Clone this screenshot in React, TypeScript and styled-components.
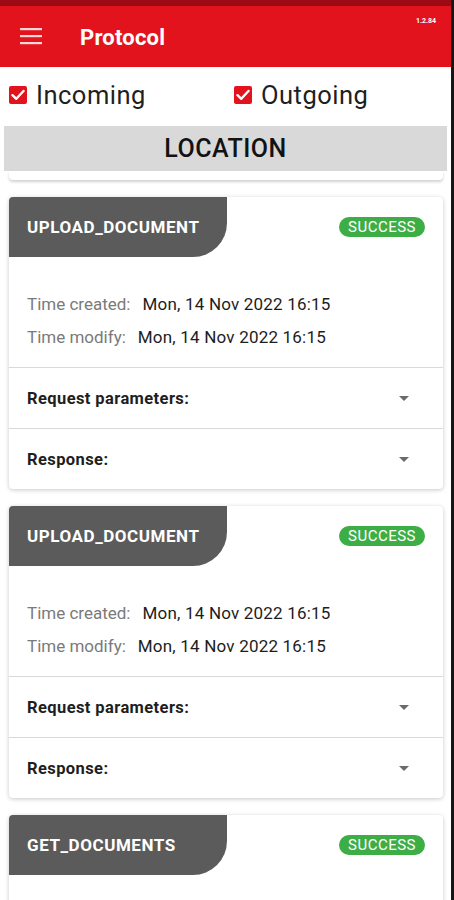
import styled, { createGlobalStyle } from "styled-components";

const GlobalStyle = createGlobalStyle`
  html, body {
    margin: 0;
    padding: 0;
    background: #ffffff;
  }
  body {
    font-family: Roboto, "Noto Sans", "Liberation Sans", sans-serif;
    overflow: hidden;
  }
`;

interface LogItem {
  method: string;
  status: string;
  created: string;
  modified: string;
}

const Screen = styled.div`
  width: 451px;
  height: 900px;
  overflow: hidden;
  border-right: 3px solid #161616;
  background: #ffffff;
`;

const StatusBar = styled.div`
  height: 6px;
  background: #9c0b14;
`;

const Header = styled.header`
  height: 61px;
  background: #e3131d;
  display: flex;
  align-items: center;
  padding-left: 20px;
  position: relative;
`;

const MenuButton = styled.div`
  width: 22px;
  height: 18px;
  display: flex;
  margin-top: -2px;
`;

const Title = styled.h1`
  margin: 2px 0 0 38px;
  color: #ffffff;
  font-size: 22px;
  font-weight: 700;
  letter-spacing: 0.2px;
`;

const Version = styled.span`
  position: absolute;
  top: 11px;
  right: 15px;
  color: #ffffff;
  font-size: 7px;
  font-weight: 700;
`;

const FilterRow = styled.div`
  height: 59px;
  display: flex;
  align-items: center;
  padding-left: 9px;
  padding-bottom: 3px;
  box-sizing: border-box;
`;

const FilterOption = styled.label<{ $width: number }>`
  width: ${(p) => p.$width}px;
  display: flex;
  align-items: center;
  gap: 9px;
  font-size: 25.5px;
  color: #1f1f1f;
  letter-spacing: 0.5px;
`;

const Check = styled.span`
  width: 18px;
  height: 18px;
  border-radius: 2px;
  background: #e3131d;
  display: flex;
  align-items: center;
  justify-content: center;
`;

const SectionBar = styled.div`
  margin: 0 4px;
  height: 45px;
  background: #d8d9d8;
  display: flex;
  align-items: center;
  justify-content: center;
  font-size: 25px;
  font-weight: 500;
  color: #121212;
  letter-spacing: 0.5px;
`;

const List = styled.div`
  display: flex;
  flex-direction: column;
  gap: 17px;
  padding: 0 8px 0 9px;
`;

const CardTail = styled.div`
  height: 9px;
  background: #ffffff;
  border-radius: 0 0 4px 4px;
  box-shadow: 0 2px 3px rgba(0, 0, 0, 0.18);
`;

const Card = styled.div`
  background: #ffffff;
  border-radius: 4px;
  box-shadow: 0 1px 4px rgba(0, 0, 0, 0.22);
  overflow: hidden;
`;

const CardTop = styled.div`
  display: flex;
  justify-content: space-between;
  align-items: flex-start;
`;

const MethodTab = styled.div`
  width: 218px;
  height: 60px;
  box-sizing: border-box;
  padding-left: 18px;
  display: flex;
  align-items: center;
  background: #5b5b5b;
  border-bottom-right-radius: 34px;
  color: #ffffff;
  font-size: 17px;
  font-weight: 700;
  letter-spacing: 0.55px;
`;

const StatusBadge = styled.span`
  margin: 20px 18px 0 0;
  height: 20px;
  padding: 0 9px;
  border-radius: 10px;
  background: #3dae46;
  color: #ffffff;
  font-size: 15px;
  display: flex;
  align-items: center;
  letter-spacing: 0.5px;
`;

const Info = styled.div`
  padding: 31px 18px 13px;
`;

const InfoLine = styled.div`
  line-height: 33px;
  font-size: 17px;
  color: #1d1d1d;
  letter-spacing: 0.2px;
`;

const InfoLabel = styled.span`
  color: #7a7a7a;
  margin-right: 12px;
  letter-spacing: 0;
`;

const Expander = styled.div`
  height: 61px;
  border-top: 1px solid #d9d9d9;
  box-sizing: border-box;
  padding: 0 34px 0 18px;
  display: flex;
  align-items: center;
  justify-content: space-between;
  font-size: 16.5px;
  font-weight: 700;
  letter-spacing: 0.4px;
  color: #1e1e1e;
`;

const items: LogItem[] = [
  {
    method: "UPLOAD_DOCUMENT",
    status: "SUCCESS",
    created: "Mon, 14 Nov 2022 16:15",
    modified: "Mon, 14 Nov 2022 16:15",
  },
  {
    method: "UPLOAD_DOCUMENT",
    status: "SUCCESS",
    created: "Mon, 14 Nov 2022 16:15",
    modified: "Mon, 14 Nov 2022 16:15",
  },
  {
    method: "GET_DOCUMENTS",
    status: "SUCCESS",
    created: "Mon, 14 Nov 2022 16:15",
    modified: "Mon, 14 Nov 2022 16:15",
  },
];

const Hamburger = () => (
  <svg width="22" height="18" viewBox="0 0 22 18">
    <rect x="0" y="1" width="22" height="2.2" fill="#ffd6d6" />
    <rect x="0" y="8" width="22" height="2.2" fill="#ffd6d6" />
    <rect x="0" y="15" width="22" height="2.2" fill="#ffd6d6" />
  </svg>
);

const Tick = () => (
  <svg width="14" height="12" viewBox="0 0 14 12">
    <path
      d="M1.5 6.2 L5.3 9.8 L12.5 2"
      stroke="#ffffff"
      strokeWidth="2.4"
      fill="none"
      strokeLinecap="round"
      strokeLinejoin="round"
    />
  </svg>
);

const Caret = () => (
  <svg width="10" height="5" viewBox="0 0 10 5">
    <path d="M0 0 L10 0 L5 5 Z" fill="#6b6b6b" />
  </svg>
);

const LogCard = ({ item }: { item: LogItem }) => (
  <Card>
    <CardTop>
      <MethodTab>{item.method}</MethodTab>
      <StatusBadge>{item.status}</StatusBadge>
    </CardTop>
    <Info>
      <InfoLine>
        <InfoLabel>Time created:</InfoLabel>
        {item.created}
      </InfoLine>
      <InfoLine>
        <InfoLabel>Time modify:</InfoLabel>
        {item.modified}
      </InfoLine>
    </Info>
    <Expander>
      Request parameters:
      <Caret />
    </Expander>
    <Expander>
      Response:
      <Caret />
    </Expander>
  </Card>
);

const App = () => {
  return (
    <Screen>
      <GlobalStyle />
      <StatusBar />
      <Header>
        <MenuButton>
          <Hamburger />
        </MenuButton>
        <Title>Protocol</Title>
        <Version>1.2.84</Version>
      </Header>
      <FilterRow>
        <FilterOption $width={225}>
          <Check>
            <Tick />
          </Check>
          Incoming
        </FilterOption>
        <FilterOption $width={200}>
          <Check>
            <Tick />
          </Check>
          Outgoing
        </FilterOption>
      </FilterRow>
      <SectionBar>LOCATION</SectionBar>
      <List>
        <CardTail />
        {items.map((item, i) => (
          <LogCard item={item} key={i} />
        ))}
      </List>
    </Screen>
  );
};

export default App;
